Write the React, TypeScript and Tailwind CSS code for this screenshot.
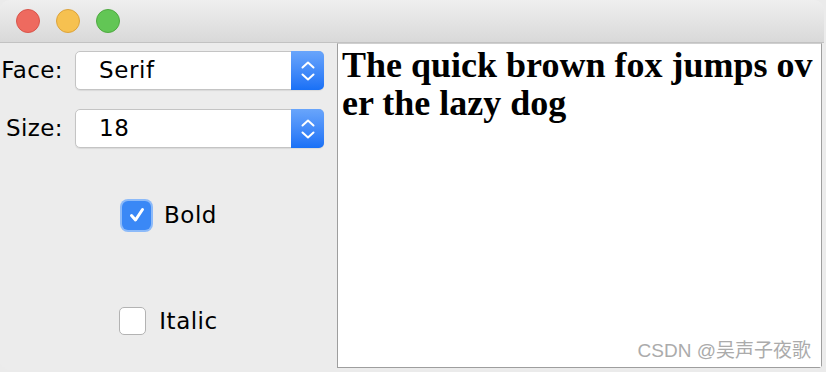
import { useState } from "react"

const ui = { fontFamily: '"DejaVu Sans", "Liberation Sans", sans-serif' }

function Chevrons() {
    return (
        <svg width="16" height="24" viewBox="0 0 16 24" fill="none" stroke="white" strokeWidth="2" strokeLinecap="round" strokeLinejoin="round">
            <path d="M2.5 8.5 L8 3.5 L13.5 8.5" />
            <path d="M2.5 15.5 L8 20.5 L13.5 15.5" />
        </svg>
    )
}

function Combo({ value }: { value: string }) {
    return (
        <div className="flex h-[39px] w-[249px] rounded-[5px] border border-[#c4c4c4] bg-white shadow-[0_1px_1px_rgba(0,0,0,0.08)]">
            <div className="flex-1 flex items-center pl-[23px] text-[23px] text-black tracking-[0.6px]">{value}</div>
            <div className="w-[33px] -my-px -mr-px rounded-r-[5px] bg-gradient-to-b from-[#69a5fb] to-[#1870f6] flex items-center justify-center">
                <Chevrons />
            </div>
        </div>
    )
}

function Row({ label, value }: { label: string; value: string }) {
    return (
        <div className="flex items-center">
            <span className="w-[64px] text-right text-[23px] tracking-[0.4px] text-black pr-px">{label}</span>
            <span className="ml-[11px]"><Combo value={value} /></span>
        </div>
    )
}

function Check({ on, label, onToggle }: { on: boolean; label: string; onToggle: () => void }) {
    return (
        <button type="button" onClick={onToggle} className="flex items-center gap-[13px]">
            {on ? (
                <span className="w-[29px] h-[29px] rounded-[6px] bg-[#3a88f6] ring-[2px] ring-[#8cbaf9] flex items-center justify-center">
                    <svg width="20" height="20" viewBox="0 0 20 20" fill="none" stroke="white" strokeWidth="3" strokeLinecap="round" strokeLinejoin="round">
                        <path d="M4.5 10.5 L8.5 15 L15.5 4.5" />
                    </svg>
                </span>
            ) : (
                <span className="w-[27px] h-[28px] rounded-[5px] border border-[#b3b3b3] bg-white" />
            )}
            <span className="text-[23px] tracking-[0.5px] text-black">{label}</span>
        </button>
    )
}

export default function App() {
    const [bold, setBold] = useState(true)
    const [italic, setItalic] = useState(false)

    return (
        <div className="w-[826px] h-[372px] bg-[#ebebeb] relative" style={ui}>
            <div className="w-[824px] h-[370px] rounded-[10px] overflow-hidden bg-[#ececec] flex flex-col">
                <div className="h-[43px] shrink-0 border-b border-[#c2c2c2] bg-gradient-to-b from-[#efefef] to-[#d9d9d9] flex items-center pl-[16px] gap-[16px]">
                    <span className="w-[24px] h-[24px] rounded-full bg-[#ee6a5f] border border-[#d8554b]" />
                    <span className="w-[24px] h-[24px] rounded-full bg-[#f6c150] border border-[#dca33c]" />
                    <span className="w-[24px] h-[24px] rounded-full bg-[#62c655] border border-[#4fa941]" />
                </div>

                <div className="flex flex-1">
                    <div className="w-[337px] shrink-0 flex flex-col pt-[8px]">
                        <Row label="Face:" value="Serif" />
                        <div className="mt-[19px]">
                            <Row label="Size:" value="18" />
                        </div>
                        <div className="mt-[50px] flex justify-center pl-[2px]">
                            <Check on={bold} label="Bold" onToggle={() => setBold(!bold)} />
                        </div>
                        <div className="mt-[71px] flex justify-center">
                            <Check on={italic} label="Italic" onToggle={() => setItalic(!italic)} />
                        </div>
                    </div>

                    <div className="relative flex-1 mr-[2px] mb-[2px] border border-[#9e9e9e] border-t-[#cfcfcf] bg-white pl-[4px] pt-[2px] overflow-hidden">
                        <div
                            className={`text-[36px] leading-[38px] text-black whitespace-nowrap ${bold ? "font-bold" : ""} ${italic ? "italic" : ""}`}
                            style={{ fontFamily: '"Liberation Serif", serif' }}
                        >
                            <div>The quick brown fox jumps ov</div>
                            <div>er the lazy dog</div>
                        </div>
                        <span
                            className="absolute right-[10px] bottom-[2px] text-[19px] text-[#ababab]"
                            style={{ fontFamily: '"Liberation Sans", "Noto Sans CJK SC", sans-serif' }}
                        >
                            CSDN @吴声子夜歌
                        </span>
                    </div>
                </div>
            </div>
        </div>
    )
}
